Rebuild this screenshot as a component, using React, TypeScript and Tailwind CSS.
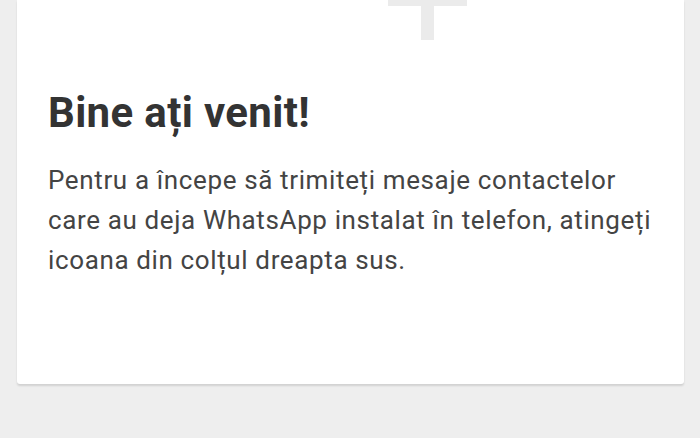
export default function App() {
  return (
    <div
      className="h-[438px] w-[700px] bg-[#eeeeee] pl-[17px] pr-[16px] overflow-hidden"
      style={{ fontFamily: "Roboto, 'Noto Sans', sans-serif" }}
    >
      <div className="h-[384px] bg-white rounded-b-[3px] shadow-[0_2px_2px_rgba(0,0,0,0.12)] flex flex-col">
        <svg className="ml-[371px] block" width="80" height="40" viewBox="0 0 80 40">
          <rect x="0" y="0" width="79" height="6" fill="#ebebeb" />
          <rect x="33" y="6" width="13" height="34" fill="#ebebeb" />
        </svg>
        <h1 className="mt-[48px] pl-[31px] text-[42px] leading-[50px] font-bold tracking-[0.35px] text-[#333333]">
          Bine ați venit!
        </h1>
        <p className="mt-[22px] pl-[31px] pr-[20px] text-[26px] leading-[40px] tracking-[0.63px] text-[#444444]">
          Pentru a începe să trimiteți mesaje contactelor care au deja WhatsApp instalat în telefon, atingeți icoana din colțul dreapta sus.
        </p>
      </div>
    </div>
  );
}
